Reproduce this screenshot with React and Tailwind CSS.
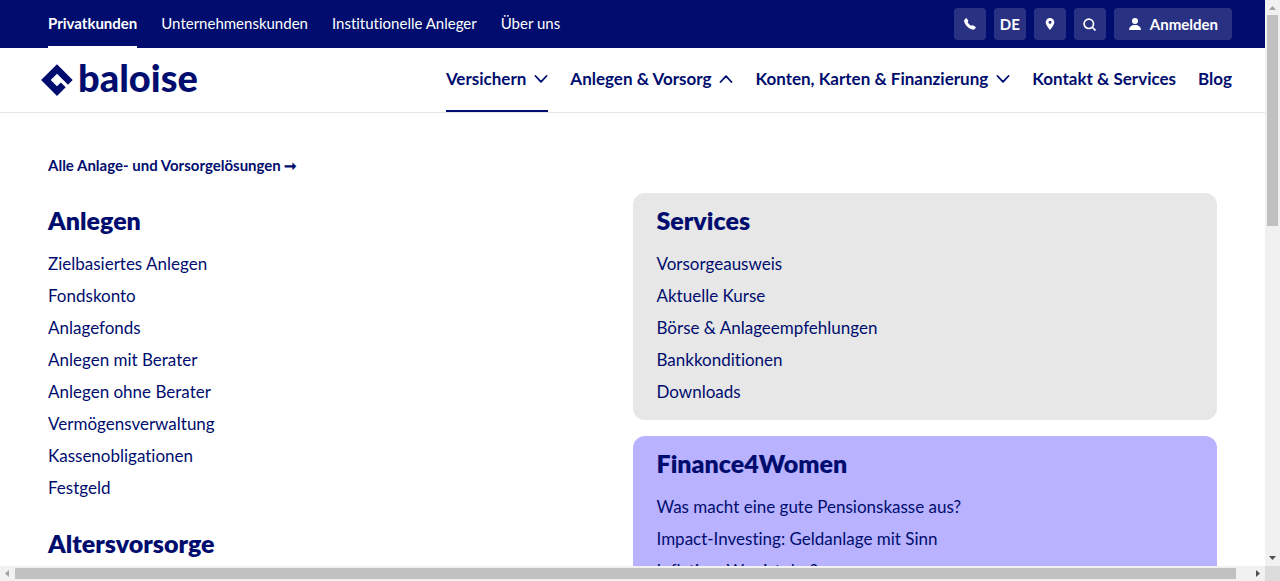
const invest = ['Zielbasiertes Anlegen', 'Fondskonto', 'Anlagefonds', 'Anlegen mit Berater', 'Anlegen ohne Berater', 'Vermögensverwaltung', 'Kassenobligationen', 'Festgeld'];
const services = ['Vorsorgeausweis', 'Aktuelle Kurse', 'Börse & Anlageempfehlungen', 'Bankkonditionen', 'Downloads'];
const women = ['Was macht eine gute Pensionskasse aus?', 'Impact-Investing: Geldanlage mit Sinn', 'Inflation: Was ist das?'];

function Chevron({ up }) {
  return (
    <svg width="14" height="8" viewBox="0 0 14 8" fill="none" stroke="currentColor" strokeWidth="1.8" strokeLinecap="round" strokeLinejoin="round" aria-hidden="true">
      <path d={up ? 'M1.5 7 7 1.2 12.5 7' : 'M1.5 1 7 6.8 12.5 1'} />
    </svg>
  );
}

function Logo() {
  return (
    <a href="#home" className="flex h-8 items-center gap-[5px]">
      <svg width="32" height="32" viewBox="0 0 32 32" fill="currentColor" aria-hidden="true">
        <path d="M16 .3 31.700 16 27 20.700 16 9.700 9.700 16 16 22.300 19.900 18.400 24.700 23.200 16 31.900.1 16z" />
      </svg>
      <span className="pb-[6px] text-[38px] leading-[26px] font-black">baloise</span>
    </a>
  );
}

function IconButton({ label, children }) {
  return (
    <button type="button" aria-label={label} className="flex size-8 items-center justify-center rounded-sm bg-[#293183] text-[15px] font-bold">
      {children}
    </button>
  );
}

function LinkList({ title, items }) {
  return (
    <section>
      <h2 className="text-[25px] leading-[30px] font-extrabold">{title}</h2>
      <ul className="mt-[17px]">
        {items.map((item) => (
          <li key={item} className="h-8 text-[17px] leading-6 whitespace-nowrap"><a href="#link">{item}</a></li>
        ))}
      </ul>
    </section>
  );
}

function NavItem({ children, chevron, up, active }) {
  return (
    <a href="#nav" className={active ? 'flex h-full items-center gap-2 border-b-2 border-[#000d6e]' : 'flex h-full items-center gap-2 border-b-2 border-transparent'}>
      {children}
      {chevron && <Chevron up={up} />}
    </a>
  );
}

export default function App() {
  return (
    <div className="grid h-screen grid-cols-[minmax(0,1fr)_15px] grid-rows-[minmax(0,1fr)_15px] bg-white font-['Lato',sans-serif] text-[#000d6e] [font-variant-ligatures:none]">
      <div className="overflow-hidden">
        <div className="flex h-12 items-center justify-between bg-[#000d6e] pr-[33px] pl-12 text-white">
          <nav className="flex h-full gap-6 text-[15px] whitespace-nowrap">
            <a href="#p" className="flex items-center border-b-2 border-white font-bold">Privatkunden</a>
            <a href="#u" className="flex items-center border-b-2 border-transparent">Unternehmenskunden</a>
            <a href="#i" className="flex items-center border-b-2 border-transparent">Institutionelle Anleger</a>
            <a href="#a" className="flex items-center border-b-2 border-transparent">Über uns</a>
          </nav>
          <div className="flex gap-2">
            <IconButton label="Telefon">
              <svg width="14" height="14" viewBox="0 0 14 14" fill="currentColor" aria-hidden="true"><path d="M1.300 3 2.500 1.500c.4-.4 1-.4 1.400 0l1.200 1.700c.3.5.3 1-.1 1.400l-.4.600c.9 1.500 2.100 2.700 3.600 3.600l.6-.3c.4-.4 1-.4 1.400-.1l2.200 1.300c.5.4.6.900.2 1.300l-1.200 1.200c-.4.4-.9.5-1.500.4C5.700 11.800 2 8.300 1.100 4.300.9 3.800 1 3.400 1.300 3z" /></svg>
            </IconButton>
            <IconButton label="Sprache">DE</IconButton>
            <IconButton label="Standorte">
              <svg width="10" height="12" viewBox="0 0 10 12" fill="currentColor" fillRule="evenodd" aria-hidden="true"><path d="M5 0a4.300 4.300 0 0 1 4.300 4.300C9.300 7.500 5 12 5 12S.7 7.500.7 4.300A4.300 4.300 0 0 1 5 0zm0 2.800a1.500 1.500 0 1 0 0 3 1.500 1.500 0 0 0 0-3z" /></svg>
            </IconButton>
            <IconButton label="Suche">
              <svg width="13" height="13" viewBox="0 0 13 13" fill="none" stroke="currentColor" strokeWidth="1.700" aria-hidden="true"><circle cx="5.800" cy="5.800" r="4.700" /><path d="m9 9 3.500 3.500" /></svg>
            </IconButton>
            <button type="button" className="flex h-8 items-center gap-2 rounded-sm bg-[#293183] px-[14px] text-[15px] font-bold">
              <svg width="14" height="12" viewBox="0 0 14 12" fill="currentColor" aria-hidden="true"><circle cx="7" cy="3" r="3" /><path d="M1 12c0-3 2.500-5 6-5s6 2 6 5z" /></svg>
              Anmelden
            </button>
          </div>
        </div>
        <header className="flex h-[65px] items-center justify-between border-b border-[#e5e5e5] pr-[33px] pl-[41px]">
          <Logo />
          <nav className="flex h-full gap-[22px] text-[17px] font-bold whitespace-nowrap">
            <NavItem chevron active>Versichern</NavItem>
            <NavItem chevron up>Anlegen &amp; Vorsorg</NavItem>
            <NavItem chevron>Konten, Karten &amp; Finanzierung</NavItem>
            <NavItem>Kontakt &amp; Services</NavItem>
            <NavItem>Blog</NavItem>
          </nav>
        </header>
        <main className="px-12 pt-10">
          <a href="#alle" className="flex h-6 items-center text-[15px] font-bold">Alle Anlage- und Vorsorgelösungen ➞</a>
          <div className="mt-4 grid grid-cols-2">
            <div className="flex flex-col gap-5 pt-3">
              <LinkList title="Anlegen" items={invest} />
              <LinkList title="Altersvorsorge" items={[]} />
            </div>
            <div className="flex flex-col gap-4">
              <div className="rounded-xl bg-[#e7e7e7] px-6 pt-3 pb-2"><LinkList title="Services" items={services} /></div>
              <div className="rounded-xl bg-[#b8b2ff] px-6 pt-3 pb-2"><LinkList title="Finance4Women" items={women} /></div>
            </div>
          </div>
        </main>
      </div>
      <div className="flex flex-col items-center justify-between bg-[#f1f1f1]" aria-hidden="true">
        <svg width="15" height="226" viewBox="0 0 15 226"><path d="M4 10h7L7.500 6z" fill="#a3a3a3" /><path d="M2 15h11v211H2z" fill="#c1c1c1" /></svg>
        <svg width="15" height="15" viewBox="0 0 15 15"><path d="M4 5h7L7.500 9z" fill="#505050" /></svg>
      </div>
      <div className="flex items-center bg-[#f1f1f1]" aria-hidden="true">
        <svg width="15" height="15" viewBox="0 0 15 15"><path d="M9 4v7L5 7.500z" fill="#a3a3a3" /></svg>
        <div className="mr-[14px] h-[11px] grow bg-[#c1c1c1]" />
        <svg width="15" height="15" viewBox="0 0 15 15"><path d="M6 4v7l4-3.500z" fill="#505050" /></svg>
      </div>
      <div className="bg-[#dcdcdc]" />
    </div>
  );
}
